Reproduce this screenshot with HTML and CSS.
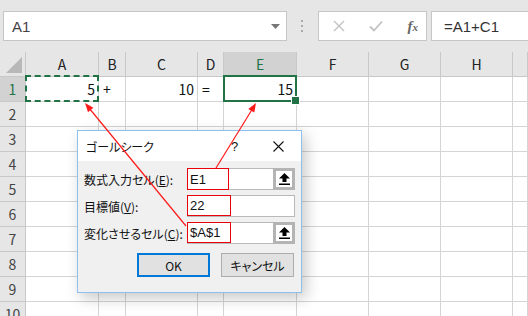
FILE: index.html
```html
<!DOCTYPE html>
<html lang="ja">
  <head>
    <meta charset="UTF-8" />
    <meta name="viewport" content="width=device-width, initial-scale=1.0" />
    <title>ゴールシーク</title>
    <link rel="stylesheet" href="styles.css">
  </head>
  <body>
    <div class="app">
      <div class="formula-bar">
        <div class="namebox">
          <span>A1</span>
          <svg class="dd" width="9" height="5" viewBox="0 0 9 5"><path d="M0 0h9L4.5 5z" fill="#777"/></svg>
        </div>
        <div class="grip">
          <svg width="3" height="12" viewBox="0 0 3 12"><rect x="0" y="0" width="2" height="2" fill="#aaa"/><rect x="0" y="5" width="2" height="2" fill="#aaa"/><rect x="0" y="10" width="2" height="2" fill="#aaa"/></svg>
        </div>
        <div class="fx-buttons">
          <svg width="12" height="12" viewBox="0 0 12 12"><path d="M1 1l10 10M11 1L1 11" stroke="#c2c2c2" stroke-width="1.4"/></svg>
          <svg width="14" height="12" viewBox="0 0 14 12"><path d="M1 6.5l4 4L13 1.5" stroke="#c2c2c2" stroke-width="1.8" fill="none"/></svg>
          <span class="fx">f<small>x</small></span>
        </div>
        <div class="formula">=A1+C1</div>
      </div>

      <div class="sheet">
        <div class="corner"></div>
        <div class="ch">A</div><div class="ch">B</div><div class="ch">C</div><div class="ch">D</div>
        <div class="ch sel">E</div><div class="ch">F</div><div class="ch">G</div><div class="ch">H</div><div class="ch"></div>

        <div class="rh sel">1</div>
        <div class="num copy">5</div><div>+</div><div class="num">10</div><div>=</div>
        <div class="num active">15</div><div></div><div></div><div></div><div></div>

        <div class="rh">2</div><div></div><div></div><div></div><div></div><div></div><div></div><div></div><div></div><div></div>
        <div class="rh">3</div><div></div><div></div><div></div><div></div><div></div><div></div><div></div><div></div><div></div>
        <div class="rh">4</div><div></div><div></div><div></div><div></div><div></div><div></div><div></div><div></div><div></div>
        <div class="rh">5</div><div></div><div></div><div></div><div></div><div></div><div></div><div></div><div></div><div></div>
        <div class="rh">6</div><div></div><div></div><div></div><div></div><div></div><div></div><div></div><div></div><div></div>
        <div class="rh">7</div><div></div><div></div><div></div><div></div><div></div><div></div><div></div><div></div><div></div>
        <div class="rh">8</div><div></div><div></div><div></div><div></div><div></div><div></div><div></div><div></div><div></div>
        <div class="rh">9</div><div></div><div></div><div></div><div></div><div></div><div></div><div></div><div></div><div></div>
        <div class="rh">10</div><div></div><div></div><div></div><div></div><div></div><div></div><div></div><div></div><div></div>
      </div>

      <div class="dialog">
        <div class="titlebar">
          <span class="title">ゴールシーク</span>
          <span class="help">?</span>
          <svg class="close" width="11" height="11" viewBox="0 0 11 11"><path d="M0.5 0.5l10 10M10.5 0.5l-10 10" stroke="#111" stroke-width="1.1"/></svg>
        </div>
        <div class="body">
          <div class="row">
            <label>数式入力セル(<u>E</u>):</label>
            <div class="input ref">
              <div class="field"><span class="mark">E1</span></div>
              <div class="pick"><svg width="11" height="12" viewBox="0 0 11 12"><path d="M5.5 0L11 5.5H7.5V9h-4V5.5H0z" fill="#000"/><rect x="0" y="10.5" width="11" height="1.5" fill="#000"/></svg></div>
            </div>
          </div>
          <div class="row">
            <label>目標値(<u>V</u>):</label>
            <div class="input">
              <div class="field"><span class="mark wide">22</span></div>
            </div>
          </div>
          <div class="row">
            <label>変化させるセル(<u>C</u>):</label>
            <div class="input ref">
              <div class="field"><span class="mark wide">$A$1</span></div>
              <div class="pick"><svg width="11" height="12" viewBox="0 0 11 12"><path d="M5.5 0L11 5.5H7.5V9h-4V5.5H0z" fill="#000"/><rect x="0" y="10.5" width="11" height="1.5" fill="#000"/></svg></div>
            </div>
          </div>
          <div class="buttons">
            <button class="default">OK</button>
            <button>キャンセル</button>
          </div>
        </div>
      </div>

      <svg class="arrows" width="528" height="316" viewBox="0 0 528 316">
        <line x1="186" y1="226" x2="89" y2="108" stroke="#ff1a1a" stroke-width="1.2"/>
        <polygon points="85,103 88,112.2 93.4,107.8" fill="#ff1a1a"/>
        <line x1="216" y1="168" x2="253" y2="108" stroke="#ff1a1a" stroke-width="1.2"/>
        <polygon points="256,103 248.3,108.9 254.3,112.5" fill="#ff1a1a"/>
      </svg>
    </div>
  </body>
</html>
```

FILE: styles.css
```css
* {
  box-sizing: border-box;
}
body {
  margin: 0;
  background-color: #ffffff;
  font-family: 'Liberation Sans', 'Noto Sans CJK JP', sans-serif;
  color: #222;
}
.app {
  position: relative;
  width: 528px;
  height: 316px;
  overflow: hidden;
}

/* formula bar */
.formula-bar {
  height: 52px;
  background-color: #e6e6e6;
  display: flex;
  align-items: flex-start;
  padding: 11px 0 0 3px;
}
.namebox {
  width: 284px;
  height: 30px;
  background-color: white;
  border: 1px solid #c6c6c6;
  display: flex;
  align-items: center;
  justify-content: space-between;
  padding: 0 6px 0 8px;
  font-size: 15px;
  color: #444;
}
.grip {
  width: 31px;
  height: 30px;
  display: flex;
  align-items: center;
  justify-content: center;
}
.fx-buttons {
  width: 109px;
  height: 30px;
  background-color: white;
  border: 1px solid #c6c6c6;
  display: flex;
  align-items: center;
  justify-content: space-between;
  padding: 0 8px 0 14px;
}
.fx {
  font-family: 'Liberation Serif', serif;
  font-style: italic;
  font-size: 15px;
  color: #666;
  font-weight: bold;
}
.fx small {
  font-size: 11px;
}
.formula {
  flex: 1;
  height: 30px;
  margin-left: 4px;
  background-color: white;
  border: 1px solid #c6c6c6;
  border-right: none;
  display: flex;
  align-items: center;
  padding-left: 12px;
  font-size: 15px;
  color: #333;
}

/* sheet */
.sheet {
  display: grid;
  grid-template-columns: 26px 73px 27px 72px 26px 73px 72px 72px 72px 15px;
  grid-auto-rows: 25px;
}
.sheet > div {
  position: relative;
  border-right: 1px solid #d4d4d4;
  border-bottom: 1px solid #d4d4d4;
  display: flex;
  align-items: flex-end;
  padding: 0 3px 2px 4px;
  font-family: 'Noto Sans CJK JP', sans-serif;
  font-size: 14px;
  line-height: 20px;
  color: #111;
}
.sheet > .ch,
.sheet > .rh,
.sheet > .corner {
  background-color: #e6e6e6;
  border-right-color: #c8c8c8;
  border-bottom-color: #c8c8c8;
  justify-content: center;
  align-items: center;
  padding: 0;
  color: #222;
}
.sheet > .rh {
  color: #444;
}
.sheet > .sel {
  background-color: #d2d2d2;
  color: #217346;
}
.corner::after {
  content: '';
  position: absolute;
  right: 3px;
  bottom: 3px;
  border-left: 16px solid transparent;
  border-bottom: 16px solid #b8b8b8;
}
.sheet > .num {
  justify-content: flex-end;
}
.copy::after {
  content: '';
  position: absolute;
  top: -2px;
  left: -1px;
  right: -1px;
  bottom: -1px;
  border: 2px dashed #217346;
}
.active::after {
  content: '';
  position: absolute;
  top: -2px;
  left: -1px;
  right: -1px;
  bottom: -1px;
  border: 2px solid #217346;
}
.active::before {
  content: '';
  position: absolute;
  right: -4px;
  bottom: -4px;
  width: 7px;
  height: 7px;
  background-color: #217346;
  border: 1px solid white;
  z-index: 2;
}

/* dialog */
.dialog {
  position: absolute;
  left: 77px;
  top: 130px;
  width: 225px;
  height: 163px;
  border: 1px solid #8fbfec;
  background-color: #f0f0f0;
  box-shadow: 4px 5px 14px rgba(0, 0, 0, 0.22);
  font-family: 'Noto Sans CJK JP', sans-serif;
  font-size: 12px;
  font-feature-settings: 'palt';
  color: #111;
}
.titlebar {
  height: 30px;
  background-color: white;
  display: flex;
  align-items: center;
  padding-left: 8px;
}
.title {
  width: 145px;
}
.help {
  font-family: 'Liberation Sans', sans-serif;
  font-size: 13px;
  width: 42px;
}
.body {
  padding: 7px 0 0 6px;
}
.row {
  display: flex;
  align-items: center;
  height: 22px;
  margin-bottom: 5px;
}
.row label {
  width: 103px;
}
.input {
  width: 108px;
  height: 22px;
  display: flex;
}
.field {
  flex: 1;
  background-color: white;
  border: 1px solid #b9b9b9;
}
.ref .field {
  border-right: none;
}
.mark {
  display: flex;
  align-items: center;
  width: 42px;
  height: 22px;
  margin: -1px 0 0 -1px;
  border: 1.5px solid #e8000b;
  padding-left: 2px;
  font-family: 'Liberation Sans', sans-serif;
  font-size: 13px;
}
.mark.wide {
  width: 44px;
  height: 21px;
}
.pick {
  width: 22px;
  height: 22px;
  border: 3px solid #b4b4b4;
  background-color: white;
  display: flex;
  align-items: center;
  justify-content: center;
}
.buttons {
  display: flex;
  justify-content: flex-end;
  gap: 11px;
  padding-right: 7px;
  margin-top: 9px;
}
button {
  width: 73px;
  height: 24px;
  background-color: #e1e1e1;
  border: 1px solid #adadad;
  font-family: 'Noto Sans CJK JP', sans-serif;
  font-size: 12px;
  font-feature-settings: 'palt';
  color: #111;
  padding: 0;
}
button.default {
  border: 2px solid #0078d7;
}

.arrows {
  position: absolute;
  left: 0;
  top: 0;
  pointer-events: none;
}
```
